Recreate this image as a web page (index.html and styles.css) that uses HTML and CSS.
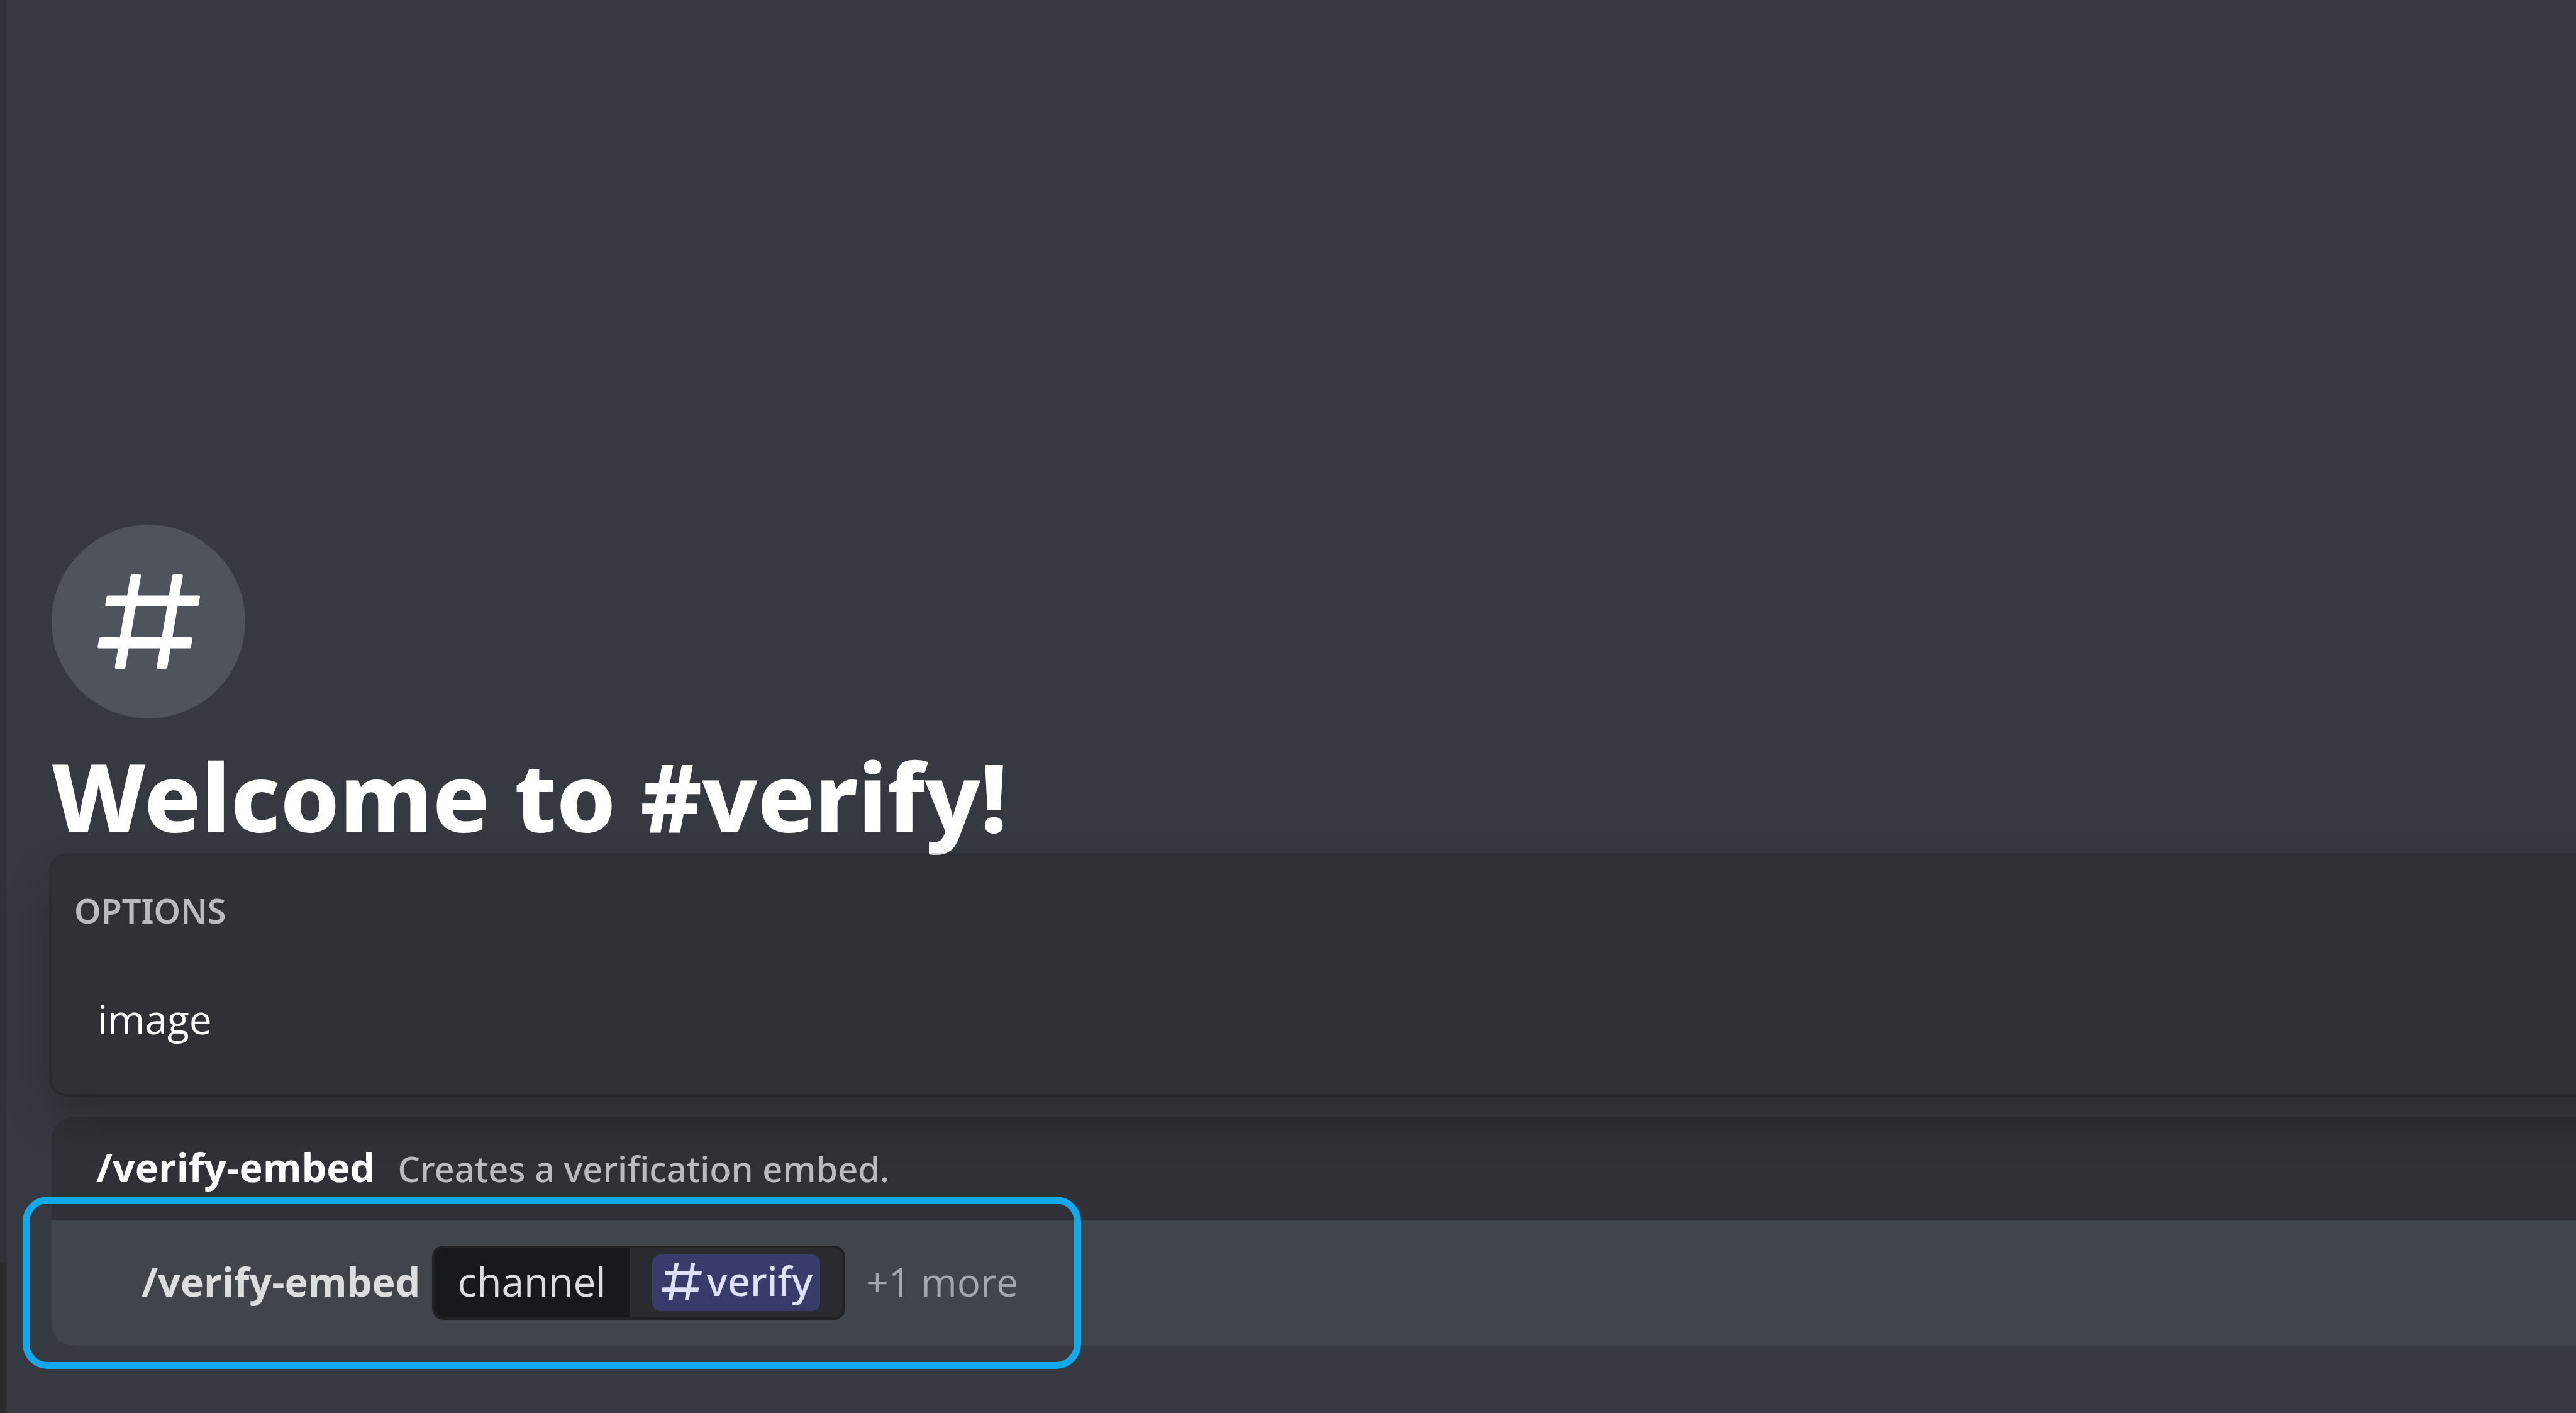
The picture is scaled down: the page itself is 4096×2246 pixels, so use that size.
FILE: index.html
```html
<!DOCTYPE html>
<html lang="en">
<head>
<meta charset="utf-8">
<title>#verify</title>
<link rel="stylesheet" href="styles.css">
</head>
<body>
<svg class="defs" aria-hidden="true">
  <symbol id="hash" viewBox="0 0 163 150">
    <g fill="currentColor" stroke="currentColor" stroke-width="4" stroke-linejoin="round">
      <path d="M54.6 2H67.2L42.4 148H29.6Z"/>
      <path d="M121 2H133.8L109 148H96.2Z"/>
      <path d="M16.6 35.5H161L158.6 49H14.2Z"/>
      <path d="M4.6 102H149L146.6 115.500H2.200Z"/>
    </g>
  </symbol>
</svg>
<div class="app">
  <aside class="sidebar">
    <div class="account"></div>
  </aside>
  <main class="chat">
    <section class="welcome">
      <div class="badge"><svg class="badge-icon" aria-hidden="true"><use href="#hash"/></svg></div>
      <h1 class="title">Welcome to #verify!</h1>
    </section>
    <section class="options">
      <h2 class="options-title">OPTIONS</h2>
      <button class="option" type="button">image</button>
    </section>
    <section class="composer">
      <div class="hint">
        <strong class="command">/verify-embed</strong>
        <span class="description">Creates a verification embed.</span>
      </div>
      <div class="entry">
        <strong class="command">/verify-embed</strong>
        <div class="argument">
          <span class="key">channel</span>
          <span class="value"><a class="mention" href="#verify"><svg class="mention-icon" aria-hidden="true"><use href="#hash"/></svg>verify</a></span>
        </div>
        <button class="more" type="button">+1 more</button>
        <div class="highlight"></div>
      </div>
    </section>
  </main>
</div>
</body>
</html>
```
FILE: styles.css
```css
* {
  box-sizing: border-box;
}

body {
  margin: 0;
  background: #36393f;
  color: #fff;
  font-family: "Open Sans", "Noto Sans", sans-serif;
  font-size: 64px;
  line-height: 88px;
}

button {
  border: 0;
  background: none;
  color: inherit;
  font: inherit;
  text-align: left;
}

.defs {
  display: none;
}

.app {
  display: flex;
  min-height: 100vh;
}

.sidebar {
  display: flex;
  flex: none;
  flex-direction: column;
  justify-content: flex-end;
  width: 10px;
  background: #2f3136;
}

.account {
  height: 239px;
  background: #292b2f;
}

.chat {
  display: flex;
  flex: 1;
  flex-direction: column;
  justify-content: flex-end;
  min-width: 0;
  overflow: hidden;
  padding: 0 0 107px 72px;
}

.badge {
  display: flex;
  align-items: center;
  justify-content: center;
  width: 308px;
  height: 308px;
  border-radius: 50%;
  background: #4f545c;
}

.badge-icon {
  width: 163px;
  height: 150px;
}

.title {
  margin: 32px 0 4px;
  font-family: "Noto Sans", sans-serif;
  font-size: 150px;
  font-weight: 800;
  line-height: 182px;
}

/* Runs past the right edge so its shadow stays even across the window. */
.options {
  position: relative;
  z-index: 1;
  margin-right: -120px;
  padding: 51px 36px 36px;
  border-radius: 24px;
  background: #2f3136;
  box-shadow: 0 0 0 4px rgba(4, 4, 5, 0.15), 0 36px 72px rgba(0, 0, 0, 0.24);
}

.options-title {
  margin: 0 0 54px;
  color: #b9bbbe;
  font-family: "Noto Sans", sans-serif;
  font-size: 54px;
  font-weight: 600;
  line-height: 72px;
}

.option {
  display: block;
  width: 100%;
  padding: 39px 37px;
}

.composer {
  margin-top: 36px;
}

.hint {
  display: flex;
  align-items: baseline;
  gap: 36px;
  padding: 36px 71px 39px;
  border-radius: 36px 0 0 0;
  background: #2f3136;
}

.command {
  font-size: 63px;
  font-weight: 700;
}

.description {
  color: #b9bbbe;
  font-family: "Noto Sans", sans-serif;
  font-size: 56px;
  font-weight: 500;
}

.entry {
  position: relative;
  display: flex;
  align-items: baseline;
  padding: 40px 143px 41px;
  border-radius: 0 0 0 36px;
  background: #40444b;
  color: #dcddde;
}

.argument {
  display: flex;
  margin: 0 33px 0 19px;
  overflow: hidden;
  border: 4px solid #202225;
  border-radius: 18px;
  background: #292b2f;
}

.key {
  padding: 13px 37px 17px 36px;
  background: #18191c;
  line-height: 80px;
}

.value {
  padding: 10px 36px;
}

.mention {
  display: flex;
  align-items: baseline;
  gap: 8px;
  padding: 0 12px 6px 15px;
  border-radius: 14px;
  background: #393c6b;
  color: #dee0fc;
  font-family: "Noto Sans", sans-serif;
  font-size: 63px;
  font-weight: 500;
  line-height: 84px;
  text-decoration: none;
}

.mention-icon {
  align-self: center;
  width: 64px;
  height: 59px;
}

.more {
  padding: 0;
  color: #a3a6aa;
  font-size: 62px;
}

.highlight {
  position: absolute;
  top: -38px;
  bottom: -37px;
  left: -46px;
  width: 1683px;
  border: 11px solid #10aaec;
  border-radius: 40px;
  pointer-events: none;
}
```
